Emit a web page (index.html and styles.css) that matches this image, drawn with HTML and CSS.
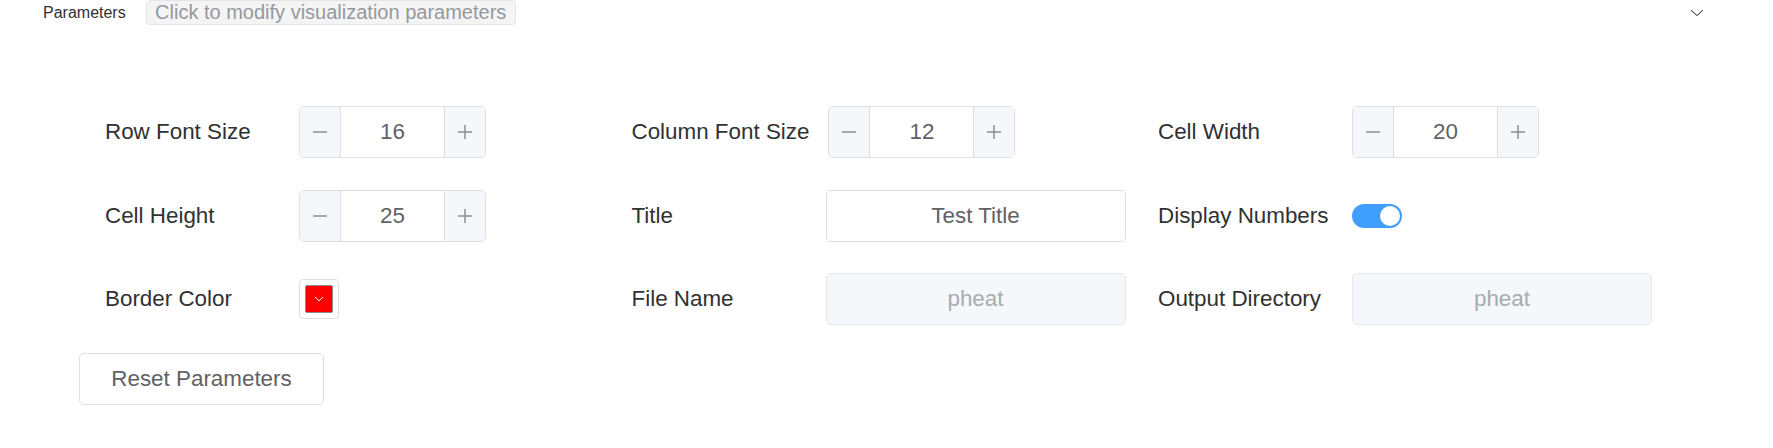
FILE: index.html
```html
<!DOCTYPE html>
<html lang="en">
<head>
<meta charset="utf-8">
<title>Parameters</title>
<link rel="stylesheet" href="styles.css">
</head>
<body>
<div class="panel">
  <div class="header">
    <span class="header-title">Parameters</span>
    <span class="header-hint">Click to modify visualization parameters</span>
    <svg class="chevron" width="14" height="8" viewBox="0 0 14 8"><path d="M1 1.2 L7 6.6 L13 1.2" fill="none" stroke="#555" stroke-width="1.1"/></svg>
  </div>
  <div class="form">
    <div class="grid">
      <div class="item">
        <label class="label">Row Font Size</label>
        <div class="num">
          <span class="num-btn minus"><svg width="16" height="16" viewBox="0 0 16 16"><path d="M1 8 H15" stroke="#8c8f96" stroke-width="1.5"/></svg></span>
          <span class="num-val">16</span>
          <span class="num-btn plus"><svg width="16" height="16" viewBox="0 0 16 16"><path d="M1 8 H15 M8 1 V15" stroke="#8c8f96" stroke-width="1.5"/></svg></span>
        </div>
      </div>
      <div class="item">
        <label class="label">Column Font Size</label>
        <div class="num">
          <span class="num-btn minus"><svg width="16" height="16" viewBox="0 0 16 16"><path d="M1 8 H15" stroke="#8c8f96" stroke-width="1.5"/></svg></span>
          <span class="num-val">12</span>
          <span class="num-btn plus"><svg width="16" height="16" viewBox="0 0 16 16"><path d="M1 8 H15 M8 1 V15" stroke="#8c8f96" stroke-width="1.5"/></svg></span>
        </div>
      </div>
      <div class="item">
        <label class="label">Cell Width</label>
        <div class="num">
          <span class="num-btn minus"><svg width="16" height="16" viewBox="0 0 16 16"><path d="M1 8 H15" stroke="#8c8f96" stroke-width="1.5"/></svg></span>
          <span class="num-val">20</span>
          <span class="num-btn plus"><svg width="16" height="16" viewBox="0 0 16 16"><path d="M1 8 H15 M8 1 V15" stroke="#8c8f96" stroke-width="1.5"/></svg></span>
        </div>
      </div>

      <div class="item">
        <label class="label">Cell Height</label>
        <div class="num">
          <span class="num-btn minus"><svg width="16" height="16" viewBox="0 0 16 16"><path d="M1 8 H15" stroke="#8c8f96" stroke-width="1.5"/></svg></span>
          <span class="num-val">25</span>
          <span class="num-btn plus"><svg width="16" height="16" viewBox="0 0 16 16"><path d="M1 8 H15 M8 1 V15" stroke="#8c8f96" stroke-width="1.5"/></svg></span>
        </div>
      </div>
      <div class="item">
        <label class="label">Title</label>
        <div class="input">Test Title</div>
      </div>
      <div class="item">
        <label class="label">Display Numbers</label>
        <span class="switch"><span class="knob"></span></span>
      </div>

      <div class="item">
        <label class="label">Border Color</label>
        <span class="color-picker">
          <span class="swatch"><svg width="10" height="6" viewBox="0 0 10 6"><path d="M1 1 L5 4.8 L9 1" fill="none" stroke="#fff" stroke-width="1"/></svg></span>
        </span>
      </div>
      <div class="item">
        <label class="label">File Name</label>
        <div class="input disabled">pheat</div>
      </div>
      <div class="item">
        <label class="label">Output Directory</label>
        <div class="input disabled">pheat</div>
      </div>
    </div>
    <button class="reset">Reset Parameters</button>
  </div>
</div>
</body>
</html>
```

FILE: styles.css
```css
* { box-sizing: border-box; }

body {
  margin: 0;
  background: #ffffff;
  font-family: "Liberation Sans", Arial, Helvetica, sans-serif;
  color: #303133;
}

.header {
  display: flex;
  align-items: center;
  height: 25px;
  padding-left: 43px;
  padding-right: 69px;
}

.header-title {
  font-size: 16px;
  color: #303133;
}

.header-hint {
  margin-left: 20px;
  height: 25px;
  width: 370px;
  display: flex;
  align-items: center;
  justify-content: center;
  background: #f4f4f5;
  border: 1px solid #e4e5e8;
  border-radius: 4px;
  font-size: 20px;
  color: #95989f;
}

.chevron {
  margin-left: auto;
}

.form {
  padding: 81px 0 0 79px;
}

.grid {
  margin-left: 26px;
  display: grid;
  grid-template-columns: 494px 494px 494px;
  column-gap: 32.5px;
  row-gap: 31.5px;
}

.item {
  display: flex;
  align-items: center;
  height: 52px;
}

.label {
  flex: 0 0 auto;
  min-width: 194px;
  padding-right: 19px;
  font-size: 22.4px;
  color: #303133;
  white-space: nowrap;
}

.num {
  display: flex;
  width: 187px;
  height: 52px;
  border: 1px solid #dcdfe6;
  border-radius: 5px;
  overflow: hidden;
  background: #fff;
}

.num-btn {
  width: 41px;
  flex: 0 0 41px;
  background: #f5f7fa;
  display: flex;
  align-items: center;
  justify-content: center;
}

.num-btn.minus { border-right: 1px solid #dcdfe6; }
.num-btn.plus { border-left: 1px solid #dcdfe6; }

.num-val {
  flex: 1;
  display: flex;
  align-items: center;
  justify-content: center;
  font-size: 22.4px;
  color: #606266;
}

.input {
  flex: 1;
  height: 52px;
  border: 1px solid #dcdfe6;
  border-radius: 5px;
  display: flex;
  align-items: center;
  justify-content: center;
  font-size: 22.4px;
  color: #606266;
  background: #fff;
}

.input.disabled {
  background: #f5f7fa;
  border-color: #e4e7ed;
  color: #a8abb2;
}

.switch {
  position: relative;
  display: inline-block;
  width: 50px;
  height: 24px;
  border-radius: 12px;
  background: #409eff;
}

.knob {
  position: absolute;
  top: 2px;
  right: 2px;
  width: 20px;
  height: 20px;
  border-radius: 50%;
  background: #fff;
}

.color-picker {
  width: 40px;
  height: 40px;
  border: 1px solid #dcdfe6;
  border-radius: 4px;
  padding: 5px;
  display: flex;
}

.swatch {
  flex: 1;
  background: #ff0000;
  border: 1px solid #8a8a8a;
  border-radius: 2px;
  display: flex;
  align-items: center;
  justify-content: center;
}

.reset {
  margin-top: 28px;
  width: 245px;
  height: 52px;
  border: 1px solid #dcdfe6;
  border-radius: 5px;
  background: #fff;
  font-family: "Liberation Sans", Arial, Helvetica, sans-serif;
  font-size: 22.4px;
  color: #606266;
  padding: 0;
}
```
